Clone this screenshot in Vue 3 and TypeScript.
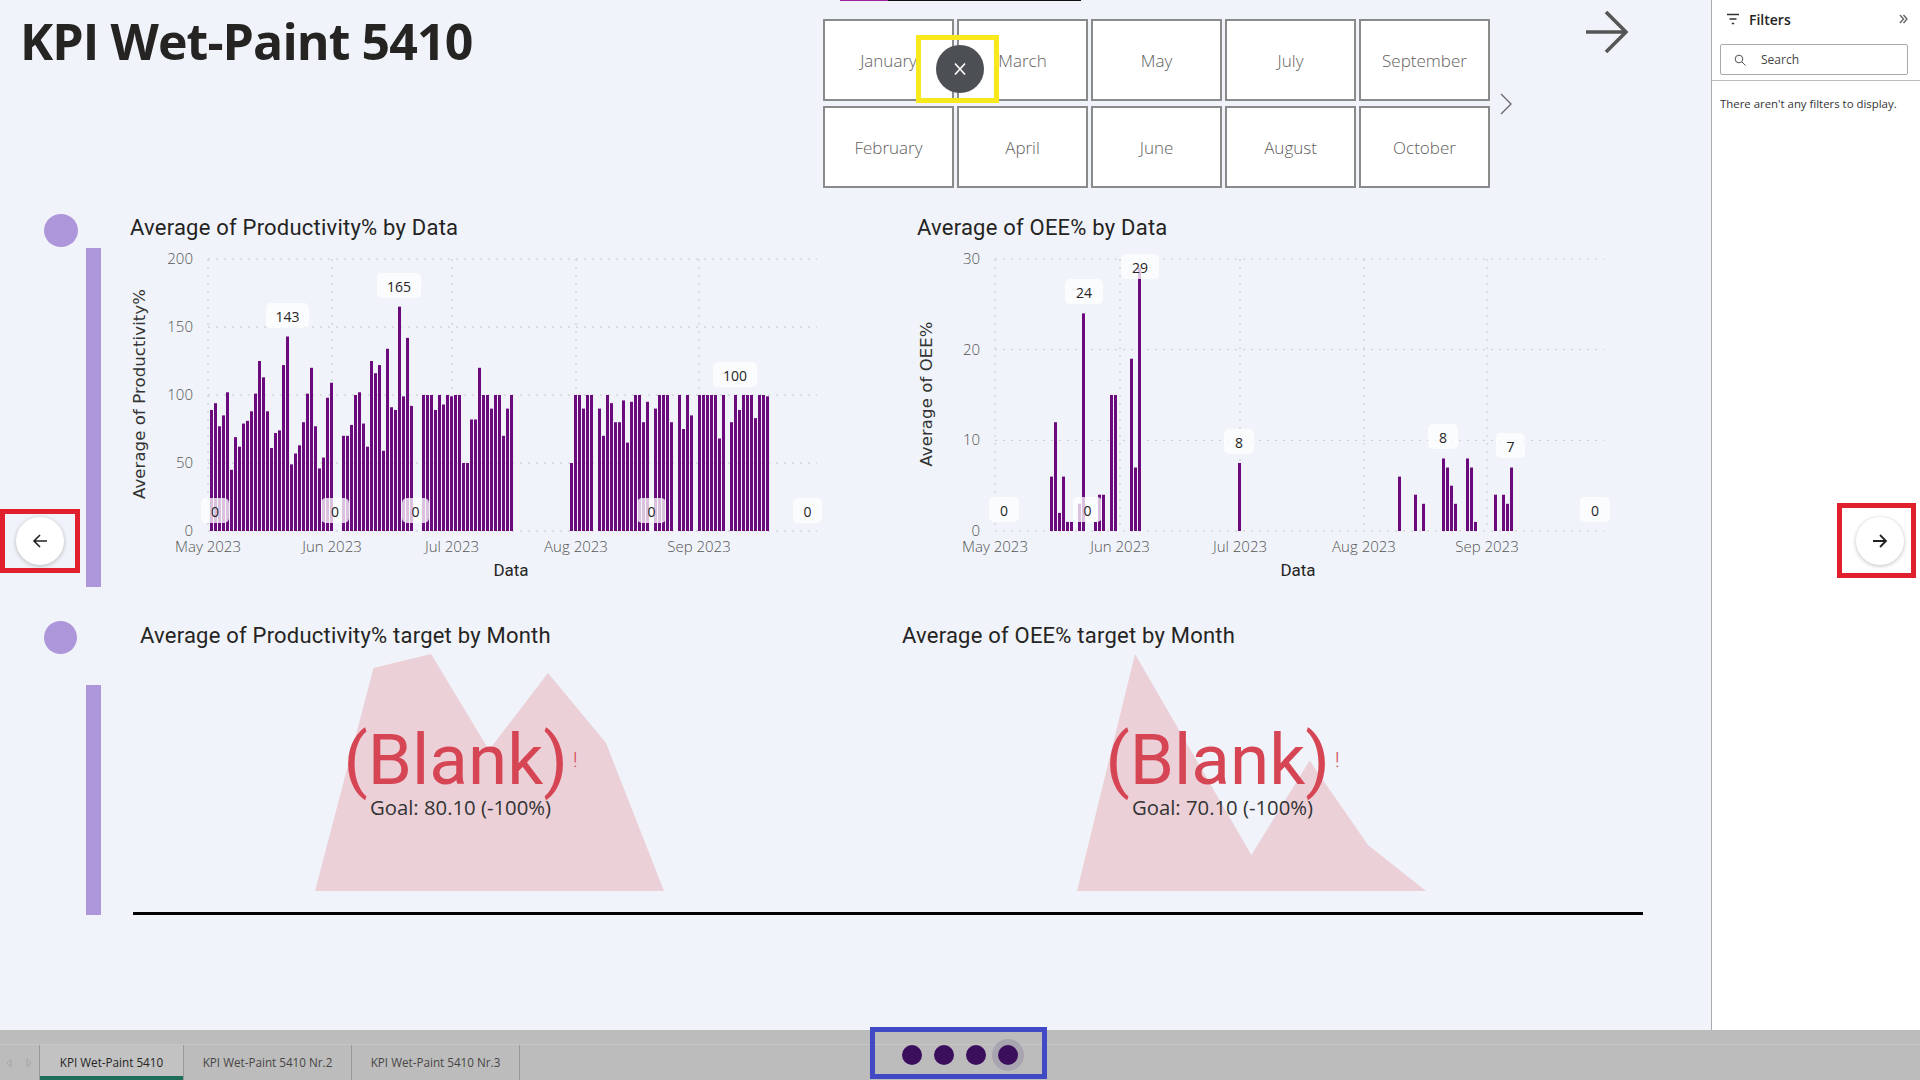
<script setup lang="ts">
interface BarLabel {
  x: number
  y: number
  w: number
  text: string
}

interface Chart {
  title: string
  yTitle: string
  ticks: string[]
  max: number
  months: { label: string; x: number }[]
  bars: { x: number; v: number }[]
  labels: BarLabel[]
}

const months = ['January', 'February', 'March', 'April', 'May', 'June', 'July', 'August', 'September', 'October']

const PLOT_TOP = 14
const PLOT_BOTTOM = 286
const PLOT_LEFT = 78
const PLOT_RIGHT = 687

// 0 = no bar that day
const productivity = [
  89, 94, 77, 85, 102, 45, 69, 62, 79, 81, 88, 101, 125, 113, 88, 61, 72, 74, 122, 143, 49, 57, 63, 80, 101, 120, 77,
  46, 54, 98, 109, 0, 0, 70, 70, 78, 100, 102, 79, 62, 125, 116, 122, 59, 134, 91, 89, 165, 99, 142, 92, 0, 0, 100,
  100, 100, 89, 100, 93, 100, 99, 100, 100, 50, 50, 82, 82, 120, 100, 100, 90, 100, 100, 70, 90, 100, 0, 0, 0, 0, 0,
  0, 0, 0, 0, 0, 0, 0, 0, 0, 50, 100, 100, 90, 100, 100, 0, 90, 70, 100, 94, 80, 80, 96, 65, 95, 100, 100, 80, 95, 0,
  90, 100, 100, 100, 80, 0, 100, 75, 100, 85, 0, 100, 100, 100, 100, 100, 68, 100, 0, 80, 100, 89, 100, 100, 100, 83,
  100, 100, 99
]

const oee: [number, number][] = [
  [0, 6], [1, 12], [2, 2], [3, 6], [4, 1], [5, 1], [7, 3], [8, 24], [11, 1], [12, 4], [13, 4], [15, 15], [16, 15],
  [20, 19], [21, 7], [22, 29], [47, 7.5], [87, 6], [91, 4], [93, 3], [98, 8], [99, 7], [100, 5], [101, 3], [104, 8],
  [105, 7], [106, 1], [111, 4], [113, 4], [114, 3], [115, 7]
]

const axisMonths = (jun: number, jul: number, aug: number, sep: number) => [
  { label: 'May 2023', x: 78 },
  { label: 'Jun 2023', x: jun },
  { label: 'Jul 2023', x: jul },
  { label: 'Aug 2023', x: aug },
  { label: 'Sep 2023', x: sep }
]

const charts: Chart[] = [
  {
    title: 'Average of Productivity% by Data',
    yTitle: 'Average of Productivity%',
    ticks: ['200', '150', '100', '50', '0'],
    max: 200,
    months: axisMonths(202, 322, 446, 569),
    bars: productivity.map((v, i) => ({ x: 80 + i * 4, v })).filter((b) => b.v > 0),
    labels: [
      { x: 136, y: 58, w: 43, text: '143' },
      { x: 247, y: 28, w: 44, text: '165' },
      { x: 583, y: 117, w: 44, text: '100' },
      { x: 71, y: 253, w: 28, text: '0' },
      { x: 191, y: 253, w: 28, text: '0' },
      { x: 272, y: 253, w: 27, text: '0' },
      { x: 507, y: 253, w: 29, text: '0' },
      { x: 663, y: 253, w: 29, text: '0' }
    ]
  },
  {
    title: 'Average of OEE% by Data',
    yTitle: 'Average of OEE%',
    ticks: ['30', '20', '10', '0'],
    max: 30,
    months: axisMonths(203, 323, 447, 570),
    bars: oee.map(([k, v]) => ({ x: 133 + k * 4, v })),
    labels: [
      { x: 72, y: 252, w: 30, text: '0' },
      { x: 148, y: 34, w: 38, text: '24' },
      { x: 156, y: 252, w: 29, text: '0' },
      { x: 204, y: 9, w: 38, text: '29' },
      { x: 307, y: 184, w: 30, text: '8' },
      { x: 511, y: 179, w: 30, text: '8' },
      { x: 579, y: 188, w: 29, text: '7' },
      { x: 663, y: 252, w: 30, text: '0' }
    ]
  }
]

const kpis = [
  {
    title: 'Average of Productivity% target by Month',
    goal: 'Goal: 80.10 (-100%)',
    points: '175,240 233.5,17 291,3 349,99 408,22 466,92 524,240'
  },
  {
    title: 'Average of OEE% target by Month',
    goal: 'Goal: 70.10 (-100%)',
    points: '175,240 233,3 349.4,204 407.6,109.7 466,194 524,240'
  }
]

const tabs = ['KPI Wet-Paint 5410', 'KPI Wet-Paint 5410 Nr.2', 'KPI Wet-Paint 5410 Nr.3']

const tickY = (i: number, count: number) => PLOT_TOP + ((PLOT_BOTTOM - PLOT_TOP) * i) / (count - 1)
const barHeight = (v: number, max: number) => ((PLOT_BOTTOM - PLOT_TOP) * v) / max
</script>

<template>
  <div class="page">
    <div class="main">
      <div class="canvas">
        <header class="header">
          <h1 class="page-title">KPI Wet-Paint 5410</h1>
          <div class="slicer-wrap">
            <div class="slicer-strip"><span class="strip-accent"></span></div>
            <div class="slicer-row">
              <div class="slicer">
                <div v-for="m in months" :key="m" class="slicer-cell">{{ m }}</div>
              </div>
              <svg class="slicer-next" width="12" height="22" viewBox="0 0 12 22">
                <path d="M1 1 L11 11 L1 21" fill="none" stroke="#666" stroke-width="1.3" />
              </svg>
            </div>
          </div>
          <svg class="back-arrow" width="42" height="42" viewBox="0 0 42 42">
            <path d="M0 21 H39 M20 1 L40 21 L20 41" fill="none" stroke="#555" stroke-width="3.6" />
          </svg>
        </header>

        <section class="chart-section">
          <div class="rail">
            <span class="rail-dot"></span>
            <span class="rail-bar rail-bar-top"></span>
          </div>
          <div v-for="chart in charts" :key="chart.title" class="chart">
            <div class="chart-title">{{ chart.title }}</div>
            <svg class="chart-svg" width="787" height="345" viewBox="0 0 787 345">
              <line
                v-for="(t, i) in chart.ticks"
                :key="t"
                class="grid"
                :x1="PLOT_LEFT"
                :x2="PLOT_RIGHT"
                :y1="tickY(i, chart.ticks.length)"
                :y2="tickY(i, chart.ticks.length)"
              />
              <line
                v-for="m in chart.months"
                :key="m.label"
                class="grid"
                :x1="m.x"
                :x2="m.x"
                :y1="PLOT_TOP"
                :y2="PLOT_BOTTOM"
              />
              <rect
                v-for="b in chart.bars"
                :key="b.x"
                class="bar"
                :x="b.x"
                :y="PLOT_BOTTOM - barHeight(b.v, chart.max)"
                width="3"
                :height="barHeight(b.v, chart.max)"
              />
              <text
                v-for="(t, i) in chart.ticks"
                :key="t"
                class="tick"
                x="63"
                :y="tickY(i, chart.ticks.length) + 5"
                text-anchor="end"
              >{{ t }}</text>
              <text
                v-for="m in chart.months"
                :key="m.label"
                class="tick"
                :x="m.x"
                y="307"
                text-anchor="middle"
              >{{ m.label }}</text>
              <text class="x-title" x="381" y="331" text-anchor="middle">Data</text>
              <text class="y-title" transform="translate(15 149) rotate(-90)" text-anchor="middle">{{ chart.yTitle }}</text>
              <g v-for="l in chart.labels" :key="l.x + l.text">
                <rect class="label-box" :x="l.x" :y="l.y" :width="l.w" height="25" rx="5" />
                <text class="label-text" :x="l.x + l.w / 2" :y="l.y + 19" text-anchor="middle">{{ l.text }}</text>
              </g>
            </svg>
          </div>
        </section>

        <section class="kpi-section">
          <div class="rail rail-kpi">
            <span class="rail-dot rail-dot-kpi"></span>
            <span class="rail-bar rail-bar-bottom"></span>
          </div>
          <div class="kpi-body">
            <div class="kpi-row">
              <div v-for="kpi in kpis" :key="kpi.title" class="kpi">
                <div class="kpi-title">{{ kpi.title }}</div>
                <div class="kpi-card">
                  <svg class="kpi-area" width="762" height="242" viewBox="0 0 762 242">
                    <polygon :points="kpi.points" fill="#ebd0d8" />
                  </svg>
                  <div class="kpi-value">
                    <span class="kpi-blank">(Blank)</span><span class="kpi-alert">!</span>
                  </div>
                  <div class="kpi-goal">{{ kpi.goal }}</div>
                </div>
              </div>
            </div>
            <div class="rule"></div>
          </div>
        </section>

        <div class="nav-mark nav-mark-left">
          <span class="nav-btn">
            <svg width="16" height="16" viewBox="0 0 16 16">
              <path d="M15 8 H2 M8 2 L2 8 L8 14" fill="none" stroke="#222" stroke-width="1.6" />
            </svg>
          </span>
        </div>
        <div class="nav-mark nav-mark-right">
          <span class="nav-btn">
            <svg width="16" height="16" viewBox="0 0 16 16">
              <path d="M1 8 H14 M8 2 L14 8 L8 14" fill="none" stroke="#222" stroke-width="1.8" />
            </svg>
          </span>
        </div>
        <div class="clear-mark">
          <span class="clear-btn">
            <svg width="14" height="14" viewBox="0 0 14 14">
              <path d="M2 1.5 L12 12.5 M12 1.5 L2 12.5" fill="none" stroke="#fff" stroke-width="1.7" />
            </svg>
          </span>
        </div>
      </div>

      <aside class="filters">
        <div class="filters-head">
          <svg width="14" height="12" viewBox="0 0 14 12">
            <path d="M1 1.5 H13 M3.5 6 H10.5 M5.8 10.5 H8.2" fill="none" stroke="#333" stroke-width="1.3" />
          </svg>
          <span class="filters-title">Filters</span>
          <svg class="filters-collapse" width="9" height="10" viewBox="0 0 9 10">
            <path d="M1 1 L4.5 5 L1 9 M4.5 1 L8 5 L4.5 9" fill="none" stroke="#666" stroke-width="1.4" />
          </svg>
        </div>
        <div class="filters-search">
          <svg width="12" height="12" viewBox="0 0 12 12">
            <circle cx="5" cy="5" r="3.8" fill="none" stroke="#555" stroke-width="1" />
            <path d="M8 8 L11.5 11.5" stroke="#555" stroke-width="1" />
          </svg>
          <span>Search</span>
        </div>
        <p class="filters-empty">There aren't any filters to display.</p>
      </aside>
    </div>

    <footer class="tabbar">
      <div class="tabs">
        <div class="tab-nav">
          <svg width="6" height="10" viewBox="0 0 6 10"><path d="M5 1 L1 5 L5 9 Z" fill="none" stroke="#a5a5a5" /></svg>
          <svg width="6" height="10" viewBox="0 0 6 10"><path d="M1 1 L5 5 L1 9 Z" fill="none" stroke="#a5a5a5" /></svg>
        </div>
        <div v-for="(t, i) in tabs" :key="t" class="tab" :class="{ active: i === 0 }">
          <span class="tab-text">{{ t }}</span>
        </div>
      </div>
      <div class="dots-mark">
        <span class="dot"></span>
        <span class="dot"></span>
        <span class="dot"></span>
        <span class="dot dot-current"></span>
      </div>
    </footer>
  </div>
</template>

<style scoped>
.page {
  position: relative;
  display: flex;
  flex-direction: column;
  width: 1920px;
  height: 1080px;
  overflow: hidden;
  background: #f0f3f9;
  font-family: Roboto, 'Open Sans', sans-serif;
  color: #252423;
}

.main {
  display: flex;
  height: 1030px;
}

.canvas {
  position: relative;
  width: 1711px;
}

.header {
  display: flex;
  height: 210px;
}

.page-title {
  width: 823px;
  margin: 0;
  padding: 8px 0 0 20px;
  box-sizing: border-box;
  font-family: 'Open Sans', sans-serif;
  font-size: 50px;
  line-height: 66px;
  font-weight: 700;
  letter-spacing: -0.9px;
  color: #252423;
}

.slicer-strip {
  width: 241px;
  height: 1px;
  margin: 0 0 18px 17px;
  background: #111;
}

.strip-accent {
  display: block;
  width: 48px;
  height: 1px;
  background: #a1209c;
}

.slicer-row {
  display: flex;
  align-items: center;
}

.slicer {
  display: grid;
  grid-template-rows: 82px 82px;
  grid-template-columns: repeat(5, 131px);
  grid-auto-flow: column;
  gap: 5px 3px;
}

.slicer-cell {
  display: flex;
  align-items: center;
  justify-content: center;
  box-sizing: border-box;
  border: 2px solid #8a8a8a;
  background: #fff;
  font-family: 'Open Sans', sans-serif;
  font-size: 17px;
  font-weight: 300;
  color: #605e5c;
}

.slicer-next {
  margin-left: 10px;
}

.back-arrow {
  margin: 11px 0 0 74px;
}

.chart-section {
  display: flex;
  height: 380px;
}

.rail {
  display: flex;
  flex-direction: column;
  align-items: flex-start;
  box-sizing: border-box;
  width: 130px;
  padding: 4px 0 0 44px;
}

.rail-dot {
  width: 34px;
  height: 33px;
  border-radius: 50%;
  background: #ae96db;
}

.rail-bar {
  width: 15px;
  margin-left: 42px;
  background: #ae96db;
}

.rail-bar-top {
  height: 339px;
  margin-top: 1px;
}

.chart {
  width: 787px;
  flex: none;
}

.chart-title,
.kpi-title {
  font-size: 22px;
  letter-spacing: 0.22px;
  color: #252423;
}

.chart-title {
  height: 35px;
  line-height: 35px;
}

.chart-svg {
  display: block;
}

.grid {
  stroke: #c8c8c8;
  stroke-width: 1;
  stroke-dasharray: 2 6;
}

.bar {
  fill: #6b0a7d;
}

.tick {
  font-family: 'Open Sans', sans-serif;
  font-size: 15px;
  font-weight: 300;
  fill: #555;
}

.x-title {
  font-family: Roboto, sans-serif;
  font-size: 17px;
  fill: #252423;
}

.y-title {
  font-family: 'DejaVu Sans', sans-serif;
  font-size: 16.5px;
  letter-spacing: 0.1px;
  fill: #333;
}

.label-box {
  fill: rgba(255, 255, 255, 0.75);
}

.label-text {
  font-family: 'Open Sans', sans-serif;
  font-size: 14px;
  fill: #252423;
}

.kpi-section {
  display: flex;
  margin-top: 31px;
}

.rail-kpi {
  width: 133px;
  padding-top: 0;
}

.rail-dot-kpi {
  width: 33px;
}

.rail-bar-bottom {
  height: 230px;
  margin-top: 31px;
}

.kpi-row {
  display: flex;
  padding-left: 7px;
}

.kpi {
  width: 762px;
  flex: none;
}

.kpi-title {
  height: 30px;
  line-height: 30px;
}

.kpi-card {
  position: relative;
  height: 240px;
}

.kpi-area {
  position: absolute;
  top: 0;
  left: 0;
}

.kpi-value {
  position: relative;
  display: flex;
  align-items: baseline;
  justify-content: center;
  width: 641px;
  padding-top: 69px;
  height: 80px;
}

.kpi-blank {
  font-size: 71px;
  line-height: 80px;
  color: #d64554;
}

.kpi-alert {
  align-self: center;
  margin-left: 5px;
  font-size: 20px;
  font-weight: 300;
  color: #d64554;
}

.kpi-goal {
  position: relative;
  width: 641px;
  margin-top: -6px;
  text-align: center;
  font-family: 'Open Sans', sans-serif;
  font-size: 20.3px;
  line-height: 26px;
  color: #333;
}

.rule {
  width: 1510px;
  height: 3px;
  margin-top: 21px;
  background: #000;
}

.nav-mark {
  position: absolute;
  display: flex;
  align-items: center;
  justify-content: center;
  box-sizing: border-box;
  border: 5px solid #e0202c;
}

.nav-mark-left {
  left: 0;
  top: 509px;
  width: 80px;
  height: 64px;
}

.nav-mark-right {
  left: 1837px;
  top: 503px;
  width: 79px;
  height: 75px;
  padding-left: 7px;
}

.nav-btn {
  display: flex;
  align-items: center;
  justify-content: center;
  flex: none;
  width: 48px;
  height: 48px;
  border-radius: 50%;
  background: #fff;
  box-shadow: 0 1px 4px rgba(0, 0, 0, 0.25);
}

.clear-mark {
  position: absolute;
  left: 916px;
  top: 35px;
  display: flex;
  align-items: center;
  justify-content: center;
  box-sizing: border-box;
  width: 83px;
  height: 68px;
  padding-left: 5px;
  border: 5px solid #f8e81c;
}

.clear-btn {
  display: flex;
  align-items: center;
  justify-content: center;
  flex: none;
  width: 48px;
  height: 48px;
  border-radius: 50%;
  background: #4c4f53;
}

.filters {
  flex: 1;
  box-sizing: border-box;
  border-left: 1px solid #aaa;
  background: #fff;
  font-family: 'Open Sans', sans-serif;
}

.filters-head {
  display: flex;
  align-items: center;
  height: 38px;
  padding-left: 14px;
}

.filters-title {
  margin-left: 9px;
  font-size: 14px;
  font-weight: 600;
  color: #252423;
}

.filters-collapse {
  margin-left: auto;
  margin-right: 12px;
}

.filters-search {
  display: flex;
  align-items: center;
  box-sizing: border-box;
  width: 188px;
  height: 31px;
  margin: 6px 0 0 8px;
  padding-left: 13px;
  border: 1px solid #aaa;
  border-radius: 2px;
  font-size: 12px;
  color: #444;
}

.filters-search span {
  margin-left: 15px;
}

.filters-empty {
  margin: 5px 0 0;
  padding: 14px 0 0 8px;
  border-top: 1px solid #bbb;
  font-size: 11.4px;
  line-height: 18px;
  color: #333;
}

.tabbar {
  position: relative;
  flex: 1;
  box-sizing: border-box;
  padding-top: 14px;
  background: #bcbcbc;
}

.tabs {
  display: flex;
  height: 36px;
  border-top: 1px solid #c6c6c6;
  box-sizing: border-box;
  font-family: 'Open Sans', sans-serif;
  font-size: 11.7px;
}

.tab-nav {
  display: flex;
  align-items: center;
  gap: 14px;
  width: 40px;
  padding-left: 6px;
  box-sizing: border-box;
  border-right: 1px solid #999;
}

.tab {
  display: flex;
  align-items: center;
  justify-content: center;
  width: 168px;
  box-sizing: border-box;
  padding-bottom: 2px;
  border-right: 1px solid #999;
  color: #484644;
}

.tab.active {
  width: 144px;
  background: #c2c2c2;
  box-shadow: inset 0 -4px 0 #1f6e5c;
  color: #252423;
}

.dots-mark {
  position: absolute;
  left: 870px;
  top: -3px;
  display: flex;
  align-items: center;
  gap: 12px;
  box-sizing: border-box;
  width: 177px;
  height: 52px;
  padding: 4px 0 0 27px;
  border: 5px solid #4249c4;
}

.dot {
  width: 20px;
  height: 20px;
  border-radius: 50%;
  background: #3b0f5c;
}

.dot-current {
  box-shadow: 0 0 0 6px #a9a5b0;
}
</style>
